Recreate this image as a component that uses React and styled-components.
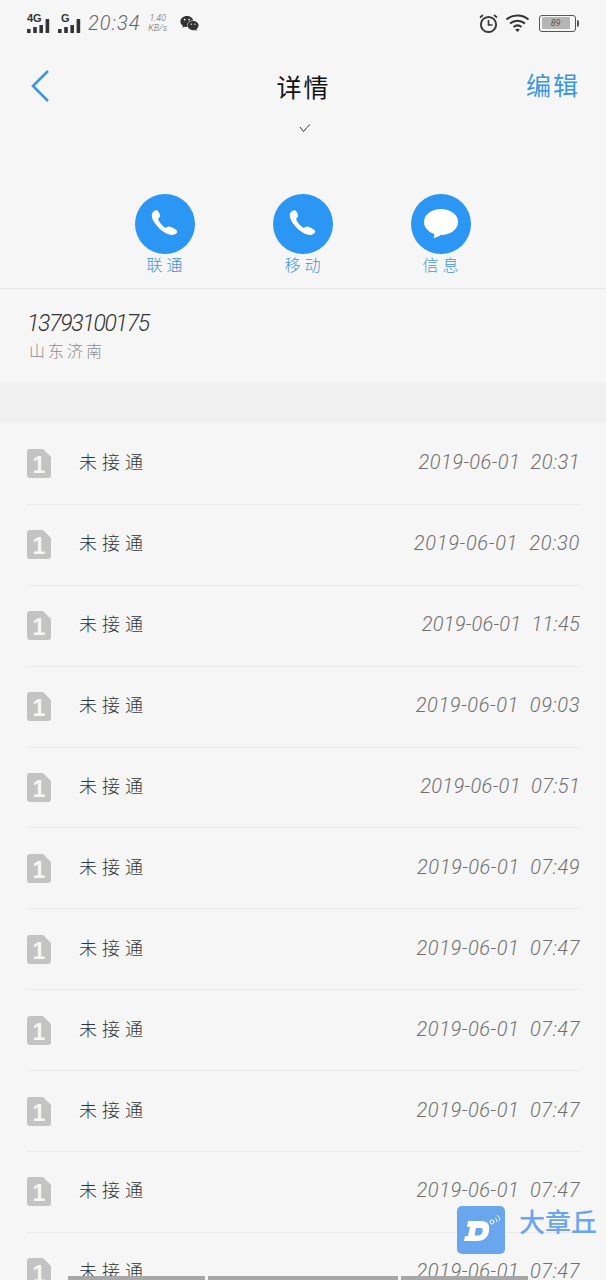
import React from "react";
import styled, { createGlobalStyle } from "styled-components";
import { FaWeixin } from "react-icons/fa";

const Global = createGlobalStyle`
  html, body { margin: 0; padding: 0; background: #f6f6f6; }
  body { font-family: "Roboto", "Noto Sans CJK SC", sans-serif; }
`;
const Page = styled.div`
  position: relative; width: 606px; height: 1280px; overflow: hidden; background: #f6f6f6;
`;
const StatusBar = styled.div`
  height: 46px; display: flex; align-items: center; justify-content: space-between;
  padding: 0 27px 0 27px; color: #3c3c3c;
`;
const StatusGroup = styled.div`
  display: flex; align-items: center; gap: ${p => p.$gap || 4}px;
`;
const SignalWrap = styled.div`
  position: relative; width: ${p => p.$w}px; height: 20px;
`;
const SignalLabel = styled.span`
  position: absolute; left: ${p => p.$left || 0}px; top: -1px; font: 700 11px/12px "Liberation Sans", sans-serif; color: #333;
`;
const SignalSvg = styled.svg`
  position: absolute; left: 0; bottom: 0;
`;
const Clock = styled.span`
  font: italic 300 20px/22px "Roboto", sans-serif; letter-spacing: 1.1px; color: #666;
`;
const Speed = styled.div`
  display: flex; flex-direction: column; align-items: center; margin: 0 4px 0 -1px;
  font: italic 300 9px/10px "Roboto", sans-serif; color: #666; width: 26px;
`;
const NavBar = styled.div`
  height: 80px; display: grid; grid-template-columns: 1fr auto 1fr; align-items: center;
  padding: 0 28px 0 30px;
`;
const Back = styled.svg`
  width: 22px; height: 34px; display: block;
`;
const NavTitle = styled.div`
  font: 400 25px/30px "Noto Sans CJK SC", sans-serif; color: #111; letter-spacing: 2px; margin-left: -1px;
`;
const NavEdit = styled.div`
  justify-self: end; font: 400 25px/30px "Noto Sans CJK SC", sans-serif; color: #3a97dc; letter-spacing: 2px; margin: -4px -2px 0 0;
`;
const Verified = styled.div`
  height: 68px; display: flex; justify-content: center; align-items: flex-start; margin-top: -3px; padding: 0 0 3px 4px;
`;
const Actions = styled.div`
  display: flex; justify-content: center; gap: 78px; height: 94px;
  border-bottom: 1px solid #e6e6e6; margin-left: -1px;
`;
const Action = styled.div`
  display: flex; flex-direction: column; align-items: center; width: 60px;
`;
const Circle = styled.div`
  width: 60px; height: 60px; border-radius: 50%; background: #2b96f3;
  display: flex; align-items: center; justify-content: center;
`;
const ActionLabel = styled.div`
  font: 300 16px/20px "Noto Sans CJK SC", sans-serif; color: #3f94d8; letter-spacing: 4px; padding-left: 4px; white-space: nowrap;
`;
const Info = styled.div`
  height: 94px; padding: 20px 27px 0; box-sizing: border-box;
`;
const PhoneNumber = styled.div`
  font: italic 300 23px/30px "Roboto", sans-serif; color: #333; letter-spacing: -1.3px;
`;
const Location = styled.div`
  font: 300 16px/22px "Noto Sans CJK SC", sans-serif; color: #8c8c8c; letter-spacing: 3px; margin-left: 2px;
`;
const Band = styled.div`
  height: 40px; background: #f0f0f0;
`;
const List = styled.div`
  padding: 1px 26px 0 27px;
`;
const Row = styled.div`
  height: 80.9px; box-sizing: border-box; border-bottom: 1px solid #e9e9e9;
  display: flex; align-items: center;
`;
const SimIcon = styled.svg`
  width: 24px; height: 29px; flex: none;
`;
const SimText = styled.text`
  font: 700 23px "Liberation Sans", sans-serif; fill: #f6f6f6;
`;
const Status = styled.div`
  margin: -5px 0 0 28px; font: 300 18px/24px "Noto Sans CJK SC", sans-serif; color: #333; letter-spacing: 5px;
`;
const Time = styled.div`
  margin: -3px 0 0 auto; font: italic 300 20px/24px "Roboto", sans-serif; color: #6f6f6f; white-space: pre;
  letter-spacing: ${p => p.$spacing}px;
`;
const Watermark = styled.div`
  position: absolute; left: 457px; top: 1206px; display: flex; gap: 14px; align-items: flex-start;
`;
const Logo = styled.div`
  width: 48px; height: 48px; border-radius: 5px; background: #6aa6ee;
  display: flex; align-items: center; justify-content: center;
`;
const WmText = styled.div`
  font: 500 26px/30px "Noto Sans CJK SC", sans-serif; color: #6aa6ee; white-space: nowrap;
`;
const BottomBar = styled.div`
  position: absolute; left: 68px; bottom: 0; display: flex; gap: 3px; height: 4px;
`;
const Seg = styled.div`
  height: 4px; width: ${p => p.$w}px; background: #a8a8a8;
`;
const BatteryWrap = styled.div`
  display: flex; align-items: center; gap: 1px; margin-left: 3px;
`;
const BatteryBody = styled.div`
  width: 32px; height: 12px; border: 1px solid #555; border-radius: 3px; padding: 1.5px;
`;
const BatteryFill = styled.div`
  width: 88%; height: 100%; background: #b5b5b5; border-radius: 1px; text-align: center;
  font: italic 400 9px/12px "Roboto", sans-serif; color: #555;
`;
const BatteryCap = styled.div`
  width: 2px; height: 7px; background: #555; border-radius: 0 2px 2px 0;
`;

function Signal({ bars }) {
  return (
    <SignalSvg width="26" height="14" viewBox="0 0 26 14">
      {bars.map((h, i) => (
        <rect key={i} x={i * 6.2} y={14 - h} width="3.6" height={h} fill="#333" rx=".5" />
      ))}
    </SignalSvg>
  );
}
const Alarm = () => (
  <svg width="21" height="21" viewBox="0 0 21 21" fill="none" stroke="#3a3a3a">
    <circle cx="10.5" cy="11.5" r="7.6" strokeWidth="2" />
    <path d="M10.5 7v5h4" strokeWidth="1.7" />
    <path d="M2 4.5 5 2M19 4.5 16 2" strokeWidth="1.7" />
  </svg>
);
const Wifi = () => (
  <svg width="25" height="20" viewBox="0 0 25 20" fill="none" stroke="#333" strokeWidth="2">
    <path d="M1.5 6.5C7.5 1 17.5 1 23.5 6.5" />
    <path d="M5 10.5c4.5-3.8 10.5-3.8 15 0" />
    <path d="M8.5 14c2.5-2 5.5-2 8 0" />
    <path d="M12.5 19l-2.4-2.6c1.5-.9 3.3-.9 4.8 0z" fill="#333" stroke="none" />
  </svg>
);
const Handset = () => (
  <svg width="36" height="36" viewBox="0 0 36 36" fill="#fff">
    <path d="M5.5 6.5c1.3-2 3.6-3 5-1.9 1.4 1.3 2.8 4 2.6 5.5-.2 1.4-1.7 1.7-1.9 3 .2 2.3 4.8 7.9 7.3 8.6 1.4.2 2.2-1.2 3.6-1.1 2.2.2 6.7 2.6 7.8 4 1 1.5-.3 3.2-2.6 4-2.2.7-5.2.3-8-1.100C13 24 7.6 18 5.5 13c-.9-2.3-1-4.7 0-6.500z" />
  </svg>
);
const Bubble = () => (
  <svg width="36" height="33" viewBox="0 0 36 33" fill="#fff">
    <ellipse cx="18" cy="14" rx="17" ry="13" />
    <path d="M11 24c.6 1.8.4 3.8-.6 6 2.8-.5 5.6-1.8 8.1-3.5z" />
  </svg>
);
const Sim = () => (
  <SimIcon viewBox="0 0 24 29">
    <path d="M3 0h13l8 8v18a3 3 0 0 1-3 3H3a3 3 0 0 1-3-3V3a3 3 0 0 1 3-3z" fill="#c3c3c3" />
    <SimText x="12" y="24" textAnchor="middle">1</SimText>
  </SimIcon>
);

const rows = [
  ["20:31", .43], ["20:30", .72], ["11:45", .25], ["09:03", .6], ["07:51", .34], ["07:49", .52],
  ["07:47", .55], ["07:47", .55], ["07:47", .55], ["07:47", .55], ["07:47", .55],
];

export default function App() {
  return (
    <Page>
      <Global />
      <StatusBar>
        <StatusGroup $gap={5}>
          <SignalWrap $w={26}><SignalLabel>4G</SignalLabel><Signal bars={[4,6,8,14]} /></SignalWrap>
          <SignalWrap $w={25}><SignalLabel $left={3}>G</SignalLabel><Signal bars={[4,6,8,14]} /></SignalWrap>
          <Clock>20:34</Clock>
          <Speed><span>1.40</span><span>KB/s</span></Speed>
          <FaWeixin size={19} color="#333" />
        </StatusGroup>
        <StatusGroup $gap={6}>
          <Alarm />
          <Wifi />
          <BatteryWrap>
            <BatteryBody><BatteryFill>89</BatteryFill></BatteryBody>
            <BatteryCap />
          </BatteryWrap>
        </StatusGroup>
      </StatusBar>
      <NavBar>
        <Back viewBox="0 0 22 34" fill="none" stroke="#3a97dc" strokeWidth="2.6">
          <path d="M18 2 3 17l15 15" />
        </Back>
        <NavTitle>详情</NavTitle>
        <NavEdit>编辑</NavEdit>
      </NavBar>
      <Verified>
        <svg width="12" height="10" viewBox="0 0 12 10" fill="none" stroke="#333" strokeWidth="1">
          <path d="M1 4l3.5 4.5C6.5 6 8.5 3.5 11 1.5" />
        </svg>
      </Verified>
      <Actions>
        <Action><Circle><Handset /></Circle><ActionLabel>联通</ActionLabel></Action>
        <Action><Circle><Handset /></Circle><ActionLabel>移动</ActionLabel></Action>
        <Action><Circle><Bubble /></Circle><ActionLabel>信息</ActionLabel></Action>
      </Actions>
      <Info>
        <PhoneNumber>13793100175</PhoneNumber>
        <Location>山东济南</Location>
      </Info>
      <Band />
      <List>
        {rows.map(([t, s], i) => (
          <Row key={i}>
            <Sim />
            <Status>未接通</Status>
            <Time $spacing={s}>{`2019-06-01  ${t}`}</Time>
          </Row>
        ))}
      </List>
      <Watermark>
        <Logo>
          <svg width="38" height="34" viewBox="0 0 38 34" fill="none">
            <path d="M6 8h13c7 0 9 4 8 10-1 7-6 10-12 10H2l1-5h3l2-9H5z" fill="#fff" />
            <path d="M14 15h4c3 0 3 2 2.5 4-.5 2-2 3.5-4.5 3.5h-3.500z" fill="#6aa6ee" />
            <circle cx="30" cy="9" r="2" stroke="#fff" strokeWidth="1" />
            <path d="M33 5c1.5 1 2 2.5 2 4M35 2c2 1.5 3 3.5 3 6" stroke="#fff" strokeWidth="1" />
          </svg>
        </Logo>
        <WmText>大章丘</WmText>
      </Watermark>
      <BottomBar>
        <Seg $w={137} /><Seg $w={190} /><Seg $w={127} />
      </BottomBar>
    </Page>
  );
}
